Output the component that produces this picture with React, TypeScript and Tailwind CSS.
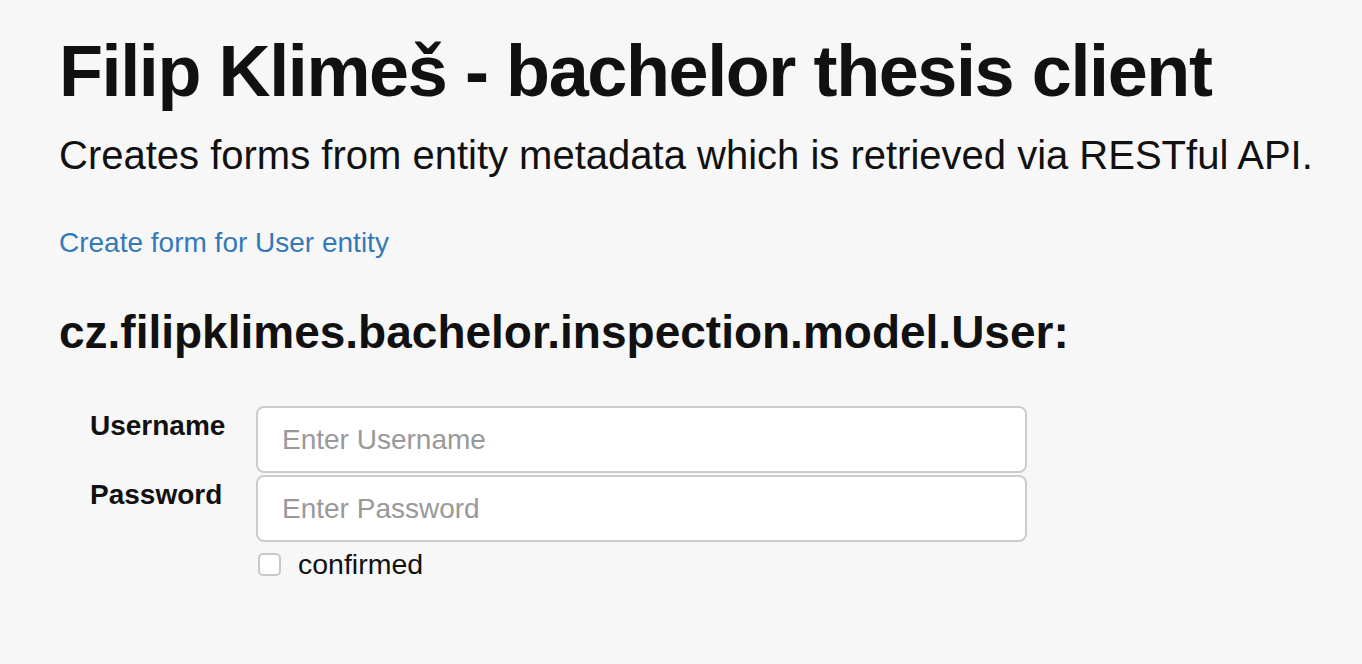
import React from 'react';

const fields = [
  { label: 'Username', placeholder: 'Enter Username', type: 'text' },
  { label: 'Password', placeholder: 'Enter Password', type: 'password' },
];

export default function App() {
  return (
    <div className="min-h-[664px] w-full bg-[#f7f7f7] text-[#111] font-['Liberation_Sans',Arial,sans-serif]">
      <div className="pl-[59px] pt-[29px]">
        <h1 className="text-[72px] leading-[84px] font-bold tracking-[-1.4px]">Filip Klimeš - bachelor thesis client</h1>
        <p className="mt-[18px] text-[40px] leading-[48px]">Creates forms from entity metadata which is retrieved via RESTful API.</p>

        <a href="#" className="mt-[47px] block w-fit text-[28px] leading-[34px] text-[#337ab7]">Create form for User entity</a>

        <h3 className="mt-[45px] text-[46px] leading-[54px] font-bold">cz.filipklimes.bachelor.inspection.model.User:</h3>

        <form className="mt-[47px] w-[968px]">
          {fields.map((f) => (
            <div key={f.label} className="mb-[2px] flex items-start">
              <label className="w-[197px] pl-[31px] pt-[4px] text-[28px] leading-[32px] font-bold">{f.label}</label>
              <input
                type={f.type}
                placeholder={f.placeholder}
                className="h-[67px] w-[771px] rounded-[8px] border-2 border-[#cccccc] bg-white px-[24px] text-[28px] placeholder:text-[#999999] outline-none"
              />
            </div>
          ))}
          <div className="flex items-center pl-[199px] pt-[4px]">
            <span className="h-[23px] w-[23px] rounded-[5px] border-2 border-[#c8c8c8] bg-white" />
            <span className="ml-[17px] text-[28.5px] leading-[32px]">confirmed</span>
          </div>
        </form>
      </div>
    </div>
  );
}
